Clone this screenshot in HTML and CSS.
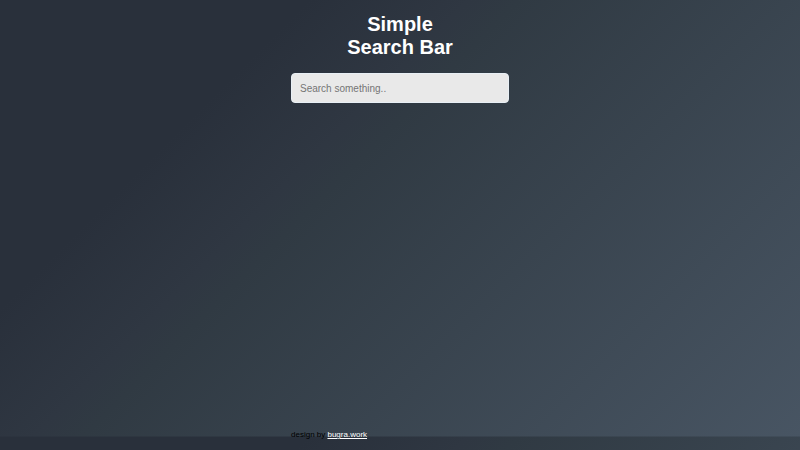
FILE: index.html
```html
<!DOCTYPE html>
<html lang="en">
<head>
    <meta charset="UTF-8">
    <meta name="viewport" content="width=device-width, initial-scale=1.0">
    <title>Simple Search Bar</title>
    <link rel="stylesheet" href="styles.css">
</head>
<body>
    <div class="container">
        <h1 class="title">Simple<br>Search Bar</h1>
        <form class="search">
            <input type="text" class="search-input" placeholder="Search something.." aria-label="Search">
        </form>
        <footer class="credit">design by <a href="https://bugra.work">bugra.work</a></footer>
    </div>
</body>
</html>
```

FILE: styles.css
```css
* {
    box-sizing: border-box;
}
body {
    min-height: 100vh;
    margin: 0;
    background-color: #29303b;
    background-image: linear-gradient(135deg, #29303b 0%, #29303b 25%, #2f3742 38%, #303a43 42%, #485563 100%);
    background-size: 100% 97vh;
    font-family: "Liberation Sans", Arial, sans-serif;
}
.container {
    display: flex;
    flex-direction: column;
    max-width: 218px;
    min-height: 100vh;
    margin: 0 auto;
    padding: 13px 0 10px;
}
.title {
    margin: 0 0 14px;
    color: #fff;
    font-size: 20px;
    line-height: 23px;
    text-align: center;
}
.search-input {
    display: block;
    width: 100%;
    height: 30px;
    padding: 0 8px;
    border: 1px solid #e8eff5;
    border-radius: 4px;
    background-color: #e9e9e9;
    font-family: inherit;
    font-size: 10px;
    outline: none;
}
.search-input::placeholder {
    color: #757575;
}
.credit {
    margin-top: auto;
    color: #000;
    font-size: 8px;
    line-height: 10px;
}
.credit a {
    color: #fff;
    text-decoration: underline;
    text-decoration-thickness: 1px;
    text-underline-offset: 1px;
}
```
